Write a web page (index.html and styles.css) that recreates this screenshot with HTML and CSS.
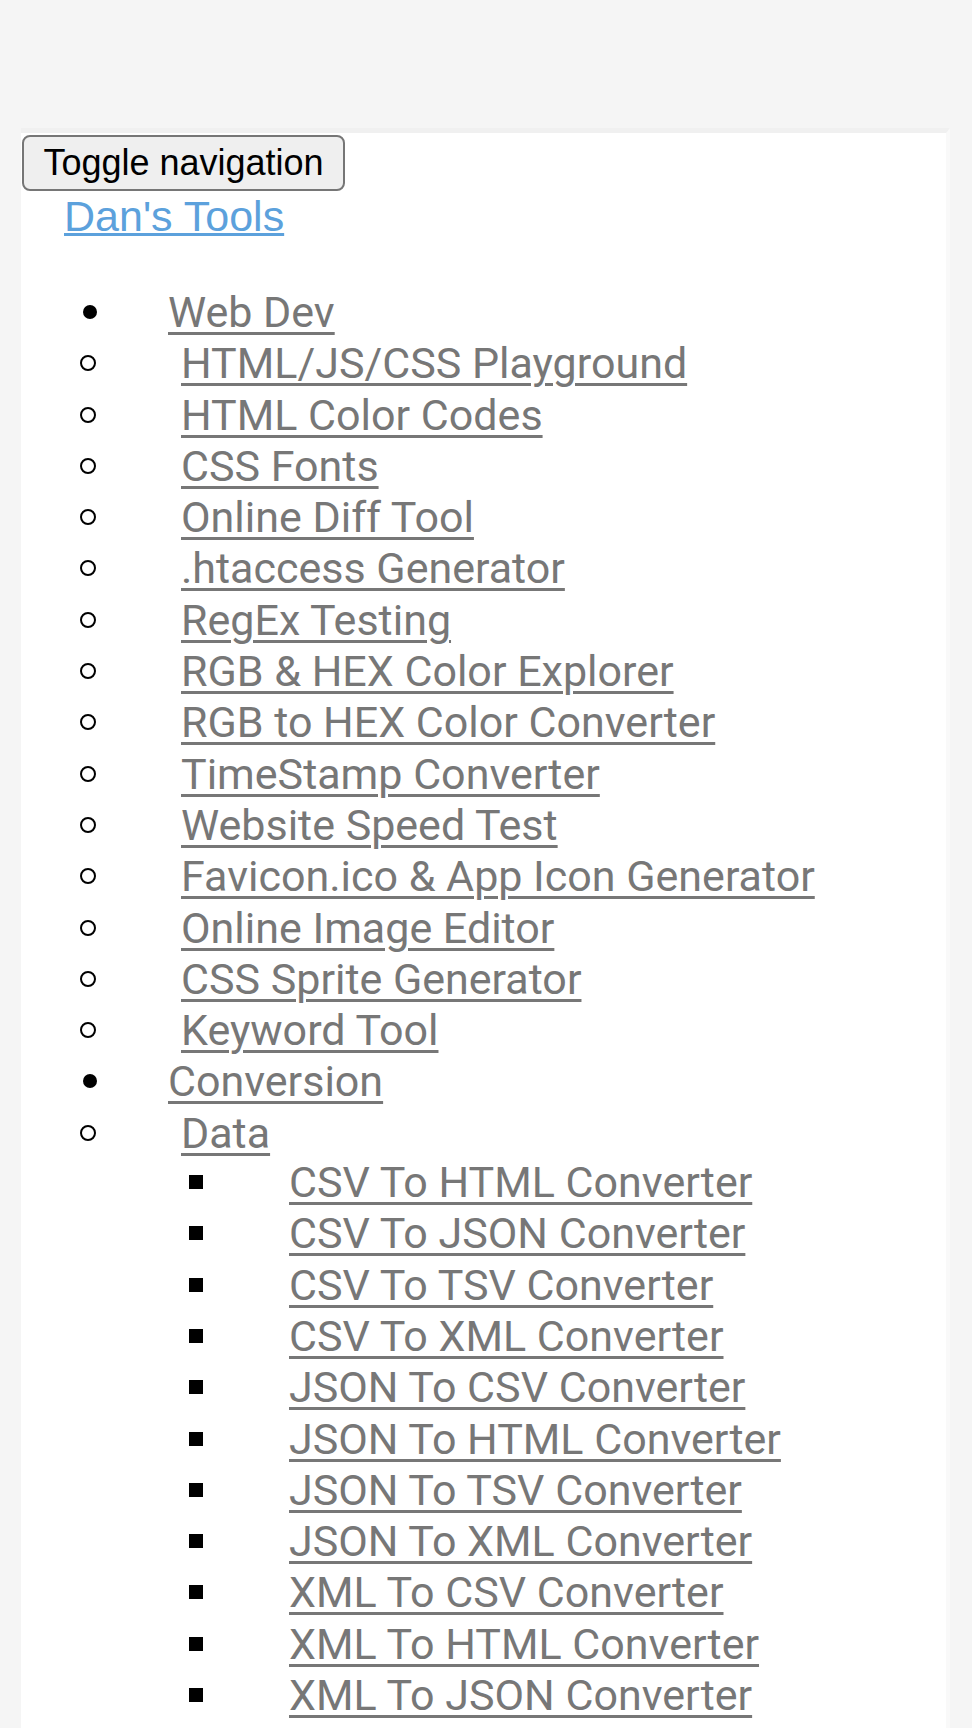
FILE: index.html
```html
<!DOCTYPE html>
<html lang="en">
<head>
<meta charset="utf-8">
<title>Dan's Tools</title>
<link rel="stylesheet" href="styles.css">
</head>
<body>
<nav class="navbar">
  <button class="toggle" type="button">Toggle navigation</button>
  <a class="brand" href="#">Dan's Tools</a>
  <ul class="nav lvl1">
    <li><a href="#">Web Dev</a>
      <ul class="lvl2">
        <li><a href="#">HTML/JS/CSS Playground</a></li>
        <li><a href="#">HTML Color Codes</a></li>
        <li><a href="#">CSS Fonts</a></li>
        <li><a href="#">Online Diff Tool</a></li>
        <li><a href="#">.htaccess Generator</a></li>
        <li><a href="#">RegEx Testing</a></li>
        <li><a href="#">RGB &amp; HEX Color Explorer</a></li>
        <li><a href="#">RGB to HEX Color Converter</a></li>
        <li><a href="#">TimeStamp Converter</a></li>
        <li><a href="#">Website Speed Test</a></li>
        <li><a href="#">Favicon.ico &amp; App Icon Generator</a></li>
        <li><a href="#">Online Image Editor</a></li>
        <li><a href="#">CSS Sprite Generator</a></li>
        <li><a href="#">Keyword Tool</a></li>
      </ul>
    </li>
    <li><a href="#">Conversion</a>
      <ul class="lvl2">
        <li><a href="#">Data</a>
          <ul class="lvl3">
            <li><a href="#">CSV To HTML Converter</a></li>
            <li><a href="#">CSV To JSON Converter</a></li>
            <li><a href="#">CSV To TSV Converter</a></li>
            <li><a href="#">CSV To XML Converter</a></li>
            <li><a href="#">JSON To CSV Converter</a></li>
            <li><a href="#">JSON To HTML Converter</a></li>
            <li><a href="#">JSON To TSV Converter</a></li>
            <li><a href="#">JSON To XML Converter</a></li>
            <li><a href="#">XML To CSV Converter</a></li>
            <li><a href="#">XML To HTML Converter</a></li>
            <li><a href="#">XML To JSON Converter</a></li>
            <li><a href="#">XML To TSV Converter</a></li>
          </ul>
        </li>
      </ul>
    </li>
  </ul>
</nav>
</body>
</html>
```
FILE: styles.css
```css
html, body {
  margin: 0;
  padding: 0;
}
body {
  background: #f5f5f5;
  font-family: Roboto, "Noto Sans", sans-serif;
}
.navbar {
  margin: 128px 0 0 21px;
  width: 925px;
  min-height: 1600px;
  background: #fff;
  border-top: 5px solid #f0f0f0;
  border-right: 4px solid #f9f9f9;
  box-sizing: content-box;
}
.toggle {
  display: block;
  margin: 2px 0 0 1px;
  width: 323px;
  height: 56px;
  padding: 0;
  font-family: "Liberation Sans", Arial, sans-serif;
  font-size: 36px;
  color: #000;
  background: #efefef;
  border: 2.5px solid #767676;
  border-radius: 8px;
}
.brand {
  display: inline-block;
  margin-left: 43px;
  font-family: "Liberation Sans", Arial, sans-serif;
  font-size: 43px;
  line-height: 50px;
  color: #5ca1dc;
  text-decoration: underline;
  text-decoration-thickness: 3px;
}
.nav, .nav ul {
  list-style: none;
  margin: 0;
  padding: 0;
}
.nav.lvl1 {
  margin-top: 46px;
  padding-left: 62px;
}
.lvl1 li {
  font-size: 43px;
  line-height: 51.3px;
}
.lvl1 a {
  color: #777;
  text-decoration: underline;
  text-decoration-thickness: 3px;
  text-underline-offset: 5px;
}
.lvl1 > li::before {
  content: "";
  display: inline-block;
  width: 14px;
  height: 14px;
  border-radius: 50%;
  background: #000;
  margin-right: 71px;
  vertical-align: 8px;
}
.nav .lvl2 {
  margin-left: -3px;
}
.lvl2 > li::before {
  content: "";
  display: inline-block;
  box-sizing: border-box;
  width: 16px;
  height: 16px;
  border-radius: 50%;
  border: 2.5px solid #000;
  margin-right: 85px;
  vertical-align: 7px;
}
.nav .lvl3 {
  margin: -2px 0 0 109px;
}
.lvl3 > li::before {
  content: "";
  display: inline-block;
  width: 14px;
  height: 14px;
  background: #000;
  margin-right: 86px;
  vertical-align: 8px;
}
```
